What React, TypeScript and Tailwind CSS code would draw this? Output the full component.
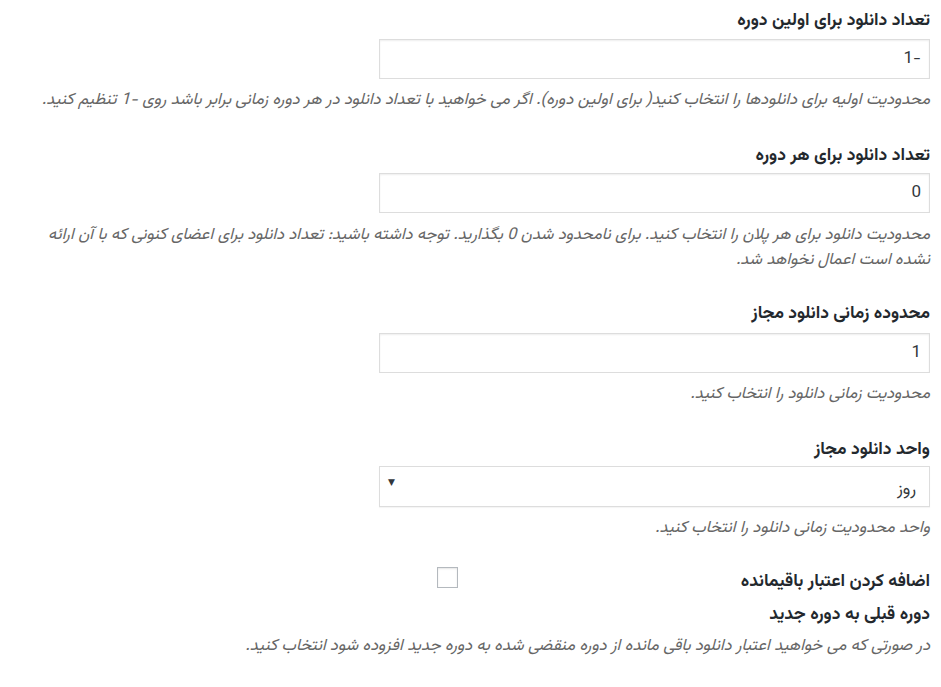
import { useState } from "react";

function Field({
  label,
  value,
  desc,
  inputClass,
  descClass,
}: {
  label: string;
  value: string;
  desc: string;
  inputClass: string;
  descClass: string;
}) {
  return (
    <div className="flex flex-col">
      <label className="text-[17.5px] leading-[25px] font-bold text-[#23282d]">{label}</label>
      <input
        defaultValue={value}
        dir="rtl"
        className={`h-10 w-[551px] border border-[#ddd] bg-white pr-[8px] pl-2 text-[17px] text-[#32373c] shadow-[inset_0_1px_2px_rgba(0,0,0,0.07)] outline-none [unicode-bidi:bidi-override] ${inputClass}`}
      />
      <p className={`text-[16.4px] leading-[25px] text-[#666] italic ${descClass}`}>{desc}</p>
    </div>
  );
}

export default function App() {
  const [checked, setChecked] = useState(false);

  return (
    <div dir="rtl" className="min-h-[687px] w-[941px] bg-white pt-[8px] pr-[11px] pl-[28px] font-['Vazirmatn','DejaVu_Sans',sans-serif]">
      <Field
        label="تعداد دانلود برای اولین دوره"
        value="-1"
        inputClass="mt-[6px]"
        descClass="mt-[9px]"
        desc="محدودیت اولیه برای دانلودها را انتخاب کنید( برای اولین دوره). اگر می خواهید با تعداد دانلود در هر دوره زمانی برابر باشد روی -1 تنظیم کنید."
      />
      <div className="mt-[30px]">
        <Field
          label="تعداد دانلود برای هر دوره"
          value="0"
          inputClass="mt-[5px]"
          descClass="mt-[10px]"
          desc="محدودیت دانلود برای هر پلان را انتخاب کنید. برای نامحدود شدن 0 بگذارید. توجه داشته باشید: تعداد دانلود برای اعضای کنونی که با آن ارائه نشده است اعمال نخواهد شد."
        />
      </div>
      <div className="mt-[28px]">
        <Field
          label="محدوده زمانی دانلود مجاز"
          value="1"
          inputClass="mt-[7px]"
          descClass="mt-[9px]"
          desc="محدودیت زمانی دانلود را انتخاب کنید."
        />
      </div>

      <div className="mt-[30px] flex flex-col">
        <label className="text-[17.5px] leading-[25px] font-bold text-[#23282d]">واحد دانلود مجاز</label>
        <div className="relative mt-[4px] h-[41px] w-[551px] border border-[#ddd] bg-white shadow-[0_1px_1px_rgba(0,0,0,0.04)]">
          <span className="absolute top-[13px] right-[13px] text-[17px] leading-[20px] text-[#32373c]">روز</span>
          <span className="absolute top-[6px] left-[8px] text-[9px] leading-[20px] text-[#32373c]">▼</span>
        </div>
        <p className="mt-[9px] text-[16.4px] leading-[25px] text-[#666] italic">واحد محدودیت زمانی دانلود را انتخاب کنید.</p>
      </div>

      <div className="mt-[26px] flex items-start">
        <div className="w-[200px] shrink-0 text-[17.5px] font-bold whitespace-nowrap text-[#23282d]">
          <div className="mt-[5px] leading-[20px]">اضافه کردن اعتبار باقیمانده</div>
          <div className="mt-[13px] leading-[20px]">دوره قبلی به دوره جدید</div>
        </div>
        <button
          type="button"
          onClick={() => setChecked(!checked)}
          aria-pressed={checked}
          className="mr-[272px] h-[21px] w-[21px] border border-[#b4b9be] bg-white shadow-[inset_0_1px_2px_rgba(0,0,0,0.1)]"
        />
      </div>
      <p className="mt-[9px] text-[16.4px] leading-[25px] text-[#666] italic">
        در صورتی که می خواهید اعتبار دانلود باقی مانده از دوره منقضی شده به دوره جدید افزوده شود انتخاب کنید.
      </p>
    </div>
  );
}
